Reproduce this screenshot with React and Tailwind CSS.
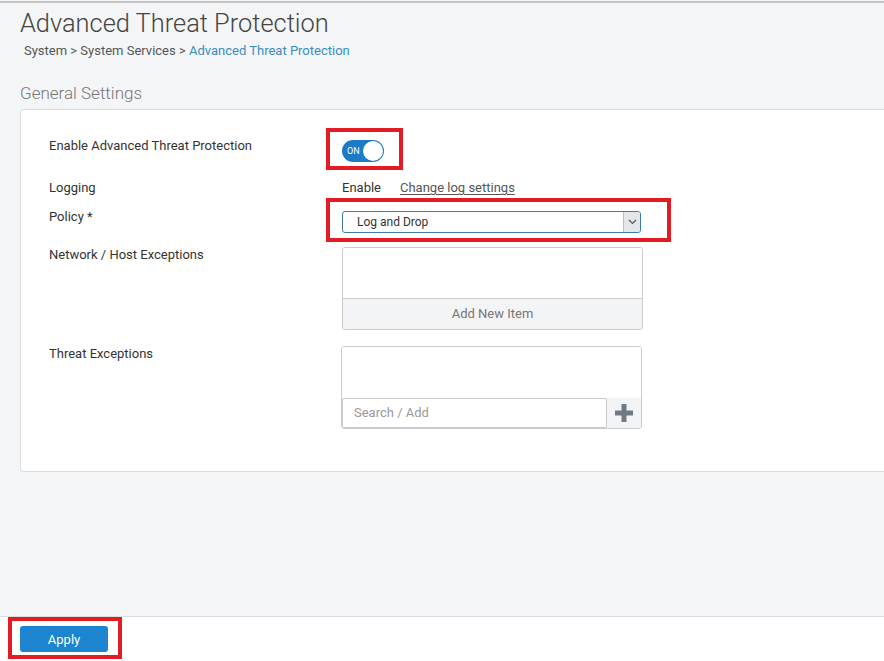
import React from 'react';

const RedBox = ({ className }) => (
  <div className={`absolute border-4 border-[#e31b23] pointer-events-none ${className}`} />
);

const Row = ({ label, children, className = '' }) => (
  <div className={`flex ${className}`}>
    <div className="w-[293px] shrink-0 text-[13px] leading-4 text-[#333]">{label}</div>
    <div className="flex-1">{children}</div>
  </div>
);

export default function App() {
  return (
    <div className="h-[661px] w-[884px] flex flex-col bg-[#f4f5f7] overflow-hidden font-['Roboto','Liberation_Sans',sans-serif]">
      <div className="h-[2px] bg-[#c4c4c6] mt-px" />

      <div className="px-5 flex-1 flex flex-col">
        <h1 className="text-[25.4px] leading-7 font-light text-[#444] mt-[6px]">Advanced Threat Protection</h1>
        <div className="text-[13px] leading-4 text-[#555] ml-1 mt-[6px]">
          System &gt; System Services &gt; <span className="text-[#3b8dc2]">Advanced Threat Protection</span>
        </div>
        <h2 className="text-[17px] leading-5 font-light text-[#777] mt-[24px]">General Settings</h2>

        <div className="mt-[6px] -mr-5 bg-white border border-r-0 border-[#dcdde0] rounded-l-[3px] pl-7 pt-[28px] pb-[42px]">
          <Row label="Enable Advanced Threat Protection">
            <div className="relative w-[42px] h-[22px] mt-[2px]">
              <div className="w-[42px] h-[22px] rounded-full bg-[#1b7bc4] flex items-center justify-between pl-[5px] pr-px">
                <span className="text-[9px] text-white leading-none">ON</span>
                <span className="w-[20px] h-[20px] rounded-full bg-white" />
              </div>
              <RedBox className="-left-4 -right-[19px] -top-3 -bottom-2" />
            </div>
          </Row>

          <Row label="Logging" className="mt-[18px]">
            <div className="text-[13px] leading-4 text-[#333] flex gap-[19px]">
              <span>Enable</span>
              <span className="text-[#555] underline underline-offset-2">Change log settings</span>
            </div>
          </Row>

          <Row label="Policy *" className="mt-[13px]">
            <div className="relative w-[299px] h-[22px] mt-[2px]">
              <div className="w-full h-full border border-[#3a7ea6] rounded-[3px] bg-white flex items-center">
                <span className="flex-1 pl-[14px] text-[12px] text-[#333]">Log and Drop</span>
                <span className="w-[17px] h-full bg-[#e4e6e9] border-l border-[#b9bcc0] rounded-r-[2px] flex items-center justify-center">
                  <svg width="9" height="6" viewBox="0 0 9 6" fill="none" stroke="#555" strokeWidth="1.2">
                    <path d="M1 1l3.5 3.5L8 1" />
                  </svg>
                </span>
              </div>
              <RedBox className="-left-4 -right-[30px] -top-[13px] -bottom-[9px]" />
            </div>
          </Row>

          <Row label="Network / Host Exceptions" className="mt-[14px]">
            <div className="w-[301px] h-[83px] border border-[#c9cbce] rounded-[3px] flex flex-col overflow-hidden">
              <div className="flex-1 bg-white" />
              <div className="h-[31px] border-t border-[#c9cbce] bg-[#f3f4f6] flex items-center justify-center text-[13px] text-[#777]">
                Add New Item
              </div>
            </div>
          </Row>

          <Row label="Threat Exceptions" className="mt-[16px]">
            <div className="-ml-px w-[301px] h-[83px] border border-[#c9cbce] rounded-[3px] flex flex-col overflow-hidden">
              <div className="flex-1 bg-white" />
              <div className="h-[30px] flex bg-[#f3f4f6]">
                <div className="w-[265px] h-full bg-white border border-[#c9cbce] rounded-[2px] flex items-center pl-[11px] text-[13px] text-[#999]">
                  Search / Add
                </div>
                <div className="flex-1 flex items-center justify-center">
                  <svg width="20" height="20" viewBox="0 0 20 20">
                    <path d="M7.5 1h5v6.5H19v5h-6.5V19h-5v-6.5H1v-5h6.5z" fill="#717a82" />
                  </svg>
                </div>
              </div>
            </div>
          </Row>
        </div>
      </div>

      <div className="h-[45px] shrink-0 bg-white border-t border-[#dcdde0] pl-5 pt-[9px]">
        <div className="relative w-[88px] h-[26px]">
          <button className="w-full h-full bg-[#1d85d0] rounded-[3px] text-white text-[13px] leading-none">Apply</button>
          <RedBox className="-left-3 -right-[14px] -top-[9px] -bottom-[7px]" />
        </div>
      </div>
    </div>
  );
}
